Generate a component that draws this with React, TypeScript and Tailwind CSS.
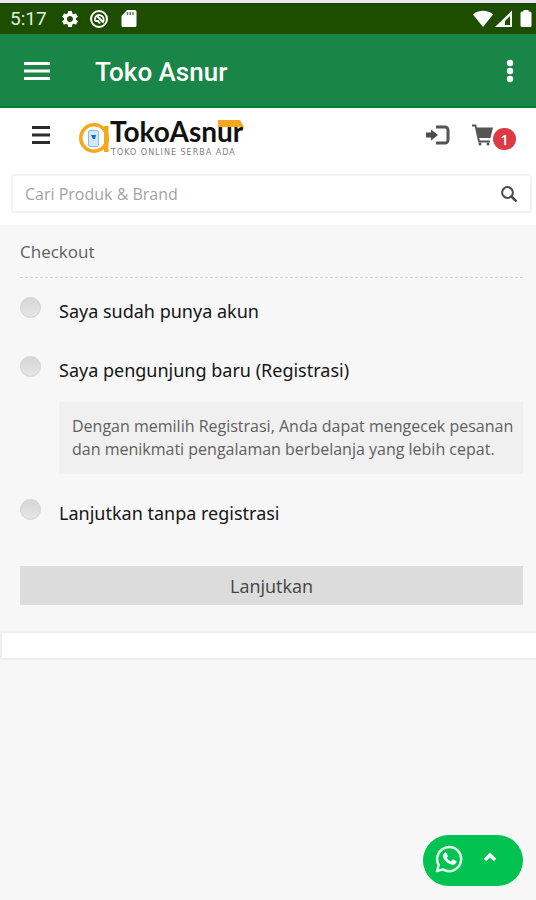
import { useState } from "react";

const options = [
  { id: "login", label: "Saya sudah punya akun" },
  {
    id: "register",
    label: "Saya pengunjung baru (Registrasi)",
    note: "Dengan memilih Registrasi, Anda dapat mengecek pesanan dan menikmati pengalaman berbelanja yang lebih cepat.",
  },
  { id: "guest", label: "Lanjutkan tanpa registrasi" },
];

function StatusBar() {
  return (
    <div className="flex h-[30px] items-center bg-[#1d4e00] pl-[10px] pr-1 font-['Roboto',sans-serif] text-white">
      <span className="w-[50px] text-[19px] leading-[30px] text-[#e6efdf]">5:17</span>
      <svg className="h-[20px] w-[20px]" viewBox="0 0 24 24" fill="currentColor" aria-hidden="true">
        <path d="M19.14 12.94c.04-.3.06-.61.06-.94 0-.32-.02-.64-.07-.94l2.03-1.58a.49.49 0 0 0 .12-.61l-1.92-3.32a.488.488 0 0 0-.59-.22l-2.39.96c-.5-.38-1.03-.7-1.62-.94l-.36-2.54a.484.484 0 0 0-.48-.41h-3.84c-.24 0-.43.17-.47.41l-.36 2.54c-.59.24-1.13.57-1.62.94l-2.39-.96c-.22-.08-.47 0-.59.22L2.74 8.87c-.12.21-.08.47.12.61l2.03 1.58c-.05.3-.09.63-.09.94s.02.64.07.94l-2.03 1.58a.49.49 0 0 0-.12.61l1.92 3.32c.12.22.37.29.59.22l2.39-.96c.5.38 1.03.7 1.62.94l.36 2.54c.05.24.24.41.48.41h3.84c.24 0 .44-.17.47-.41l.36-2.54c.59-.24 1.13-.56 1.62-.94l2.39.96c.22.08.47 0 .59-.22l1.92-3.32c.12-.22.07-.47-.12-.61l-2.01-1.58zM12 15.6A3.61 3.61 0 0 1 8.4 12c0-1.98 1.62-3.6 3.6-3.6s3.6 1.62 3.6 3.6-1.62 3.6-3.6 3.6z" />
      </svg>
      <svg className="ml-[9px] h-[20px] w-[20px]" viewBox="0 0 20 20" fill="none" stroke="currentColor" aria-hidden="true">
        <circle cx="10" cy="10" r="8" strokeWidth="2" />
        <path d="M6 12a4.5 4.5 0 1 1 8 1L8.5 7.5M6 12h3l2 2.5" strokeWidth="1.8" />
      </svg>
      <svg className="ml-3 h-[18px] w-[16px]" viewBox="0 0 16 18" aria-hidden="true">
        <path fill="currentColor" d="M6 0h8a1.5 1.5 0 0 1 1.5 1.5v14A1.5 1.5 0 0 1 14 17H2a1.5 1.5 0 0 1-1.5-1.5V6z" />
        <path stroke="#1d4e00" strokeOpacity="0.7" strokeWidth="1.5" d="M6.5 2v3M9.2 2v3M12 2v3" />
      </svg>
      <svg className="ml-auto h-[18px] w-[20px]" viewBox="0 0 20 18" fill="currentColor" aria-hidden="true">
        <path d="M0 4.5C5-.5 15-.5 20 4.5L10 17z" />
      </svg>
      <svg className="ml-[2px] h-[18px] w-[17px]" viewBox="0 0 17 18" aria-hidden="true">
        <path fill="currentColor" fillRule="evenodd" d="M17 .5V17H0zM15 6l-5 5v4h5z" />
      </svg>
      <svg className="ml-2 h-[18px] w-[12px]" viewBox="0 0 12 18" fill="currentColor" aria-hidden="true">
        <path d="M3.5 0h5v1.500H10A1.500 1.500 0 0 1 11.500 3v12.500A1.500 1.500 0 0 1 10 17H2a1.500 1.500 0 0 1-1.500-1.500V3A1.500 1.500 0 0 1 2 1.500h1.500z" />
      </svg>
    </div>
  );
}

function AppBar() {
  return (
    <div className="flex h-[74px] items-center border-b-2 border-[#057c34] bg-[#198546] px-6 pt-[2px] text-white">
      <button type="button" aria-label="Menu">
        <svg className="h-[20px] w-[26px]" viewBox="0 0 26 20" fill="currentColor" aria-hidden="true">
          <path d="M0 1h26v3H0zM0 8.5h26v3H0zM0 16h26v3H0z" />
        </svg>
      </button>
      <h1 className="ml-[45px] pt-[2px] font-['Roboto',sans-serif] text-[26px] font-medium leading-8">Toko Asnur</h1>
      <button type="button" aria-label="Opsi lainnya" className="-mr-2 ml-auto">
        <svg className="h-[24px] w-[20px]" viewBox="0 0 20 24" fill="currentColor" aria-hidden="true">
          <circle cx="10" cy="4" r="3.2" />
          <circle cx="10" cy="12" r="3.2" />
          <circle cx="10" cy="20" r="3.2" />
        </svg>
      </button>
    </div>
  );
}

function Logo() {
  return (
    <svg className="h-[50px] w-[172px]" viewBox="0 0 172 50" role="img" aria-label="TokoAsnur, toko online serba ada">
      <circle cx="15" cy="28" r="13.2" fill="none" stroke="#f6a81c" strokeWidth="3.6" />
      <path fill="#f6a81c" d="M25 16h4.5v26H25z" />
      <rect x="9.5" y="20.5" width="10" height="16" rx="1.5" fill="#d3e8fb" stroke="#8dbdf0" />
      <path fill="#1769c4" d="M12 25h5l-1 4h-2z" />
      <path fill="#f6a81c" d="M139 10h22l4 7h-26z" />
      <text x="31" y="32" fontSize="28" fontWeight="700" fill="#111111" className="font-['Lato',sans-serif]">
        TokoAsnur
      </text>
      <text x="32" y="45" fontSize="8" fill="#808080" className="font-['DejaVu_Sans',sans-serif] tracking-[1px]">
        TOKO ONLINE SERBA ADA
      </text>
    </svg>
  );
}

function ShopHeader() {
  return (
    <header className="bg-white pb-3 pl-[11px] pr-1 pt-[10px]">
      <div className="flex h-[34px] items-center pl-[21px] pr-4">
        <button type="button" aria-label="Kategori">
          <svg className="h-[18px] w-[18px]" viewBox="0 0 18 18" fill="#2b2b2b" aria-hidden="true">
            <path d="M0 0h18v3H0zM0 7.5h18v3H0zM0 15h18v3H0z" />
          </svg>
        </button>
        <a href="#beranda" className="ml-[29px]">
          <Logo />
        </a>
        <a href="#masuk" aria-label="Masuk" className="ml-auto">
          <svg className="h-[20px] w-[24px]" viewBox="0 0 24 20" aria-hidden="true">
            <path fill="#4d4d4d" d="M0 7.5h5v-3l7 5.500-7 5.500v-3H0z" />
            <path fill="none" stroke="#555555" strokeWidth="3" d="M10 2h9a3 3 0 0 1 3 3v10a3 3 0 0 1-3 3h-9" />
          </svg>
        </a>
        <a href="#keranjang" aria-label="Keranjang, 1 barang" className="ml-[22px] flex items-center">
          <svg className="h-[22px] w-[21px]" viewBox="0 0 21 22" fill="none" stroke="#555555" aria-hidden="true">
            <path fill="#555555" stroke="none" d="M4 3.5h17L18.5 14H7z" />
            <path strokeWidth="1.8" d="M0 1.5h3.500L7 17.500h11" />
            <circle cx="8" cy="20" r="1.5" fill="#555555" stroke="none" />
            <circle cx="16" cy="20" r="1.5" fill="#555555" stroke="none" />
          </svg>
          <span className="mt-2 grid h-[22px] w-[23px] place-items-center rounded-full bg-[#dc3b44] text-[15px] font-semibold leading-5 text-white">
            1
          </span>
        </a>
      </div>
      <form role="search" className="mt-[22px] flex h-[39px] items-center rounded border-2 border-[#f2f2f2] pl-3 pr-[13px]" onSubmit={(e) => e.preventDefault()}>
        <input
          type="text"
          aria-label="Cari Produk & Brand"
          placeholder="Cari Produk & Brand"
          className="min-w-0 flex-1 bg-transparent text-[16px] leading-6 text-[#444444] outline-none placeholder:text-[#a3a3a3]"
        />
        <button type="submit" aria-label="Cari">
          <svg className="h-[16px] w-[16px]" viewBox="0 0 16 16" fill="none" stroke="#4a4a4a" aria-hidden="true">
            <circle cx="6.5" cy="6.5" r="5.4" strokeWidth="2" />
            <path d="M10.5 10.5l5 5" strokeWidth="2.5" />
          </svg>
        </button>
      </form>
    </header>
  );
}

function CheckoutForm() {
  const [selected, setSelected] = useState("");

  return (
    <form className="pl-5 pr-[13px] pt-[14px]" onSubmit={(e) => e.preventDefault()}>
      <h2 className="border-b border-dashed border-[#d5d5d5] pb-3 text-[17px] leading-[26px] text-[#606060]">Checkout</h2>
      <div className="mb-[39px] mt-[19px]">
        {options.map((o) => (
          <div key={o.id} className={o.note ? "mb-[25px]" : "mb-[31px]"}>
            <div className="flex">
              <input
                type="radio"
                id={o.id}
                name="account"
                checked={selected === o.id}
                onChange={() => setSelected(o.id)}
                className="h-[21px] w-[21px] shrink-0 appearance-none rounded-full border border-[#d2d2d2] bg-linear-to-b from-[#d6d6d6] to-[#e6e6e6] checked:border-[6px] checked:border-[#198546]"
              />
              <label htmlFor={o.id} className="ml-[18px] font-['Noto_Sans','Open_Sans',sans-serif] text-[18px] leading-7 text-[#151515]">
                {o.label}
              </label>
            </div>
            {o.note && <p className="ml-[39px] mt-[18px] bg-[#f0f0f0] py-[13px] pl-[13px] pr-1 text-[16px] leading-[23px] text-[#606060]">{o.note}</p>}
          </div>
        ))}
      </div>
      <button type="submit" className="h-[39px] w-full bg-[#dcdcdc] text-[18px] leading-6 text-[#444444]">
        Lanjutkan
      </button>
    </form>
  );
}

export default function App() {
  return (
    <div className="flex min-h-screen flex-col bg-[#f7f7f7] font-['Open_Sans','Noto_Sans',sans-serif]">
      <div className="border-t-[3px] border-[#e9ebec]">
        <div className="h-px bg-[#163a1c]" />
        <StatusBar />
      </div>
      <AppBar />
      <ShopHeader />
      <main>
        <CheckoutForm />
        <div className="mt-[26px] h-[29px] border-2 border-r-0 border-[#eeeeee] bg-white" />
      </main>
      <div className="mb-[14px] ml-auto mr-[13px] mt-auto flex h-[51px] w-[100px] items-center rounded-full bg-[#02c351] pl-3 text-white">
        <a href="#whatsapp" aria-label="WhatsApp" className="mb-1">
          <svg className="h-[28px] w-[28px]" viewBox="0 0 28 28" fill="none" stroke="#dcffe6" aria-hidden="true">
            <path strokeWidth="2.5" strokeLinejoin="round" d="M2 26l1.700-6A12 12 0 1 1 8 24.400z" />
            <path
              fill="#f2fff5"
              stroke="none"
              d="M9.5 8c.8-.8 1.8-.6 2.2.2l1.100 2.500c.2.500 0 1-.9 2 .9 1.700 2.200 2.900 4 3.700l1.300-1.500c.4-.5.8-.5 1.300-.3l2.400 1.200c.6.300.7.700.5 1.500-.5 1.800-2.400 2.800-4.200 2.500C12.700 19 8.800 15.300 7.900 11.600 7.600 10.300 8.300 8.900 9.500 8z"
            />
          </svg>
        </a>
        <button type="button" aria-label="Ke atas" className="mb-2 ml-[20px]">
          <svg className="h-[12px] w-[14px]" viewBox="0 0 14 12" fill="none" stroke="currentColor" strokeWidth="3.5" aria-hidden="true">
            <path d="M2 9l5-5 5 5" />
          </svg>
        </button>
      </div>
    </div>
  );
}
